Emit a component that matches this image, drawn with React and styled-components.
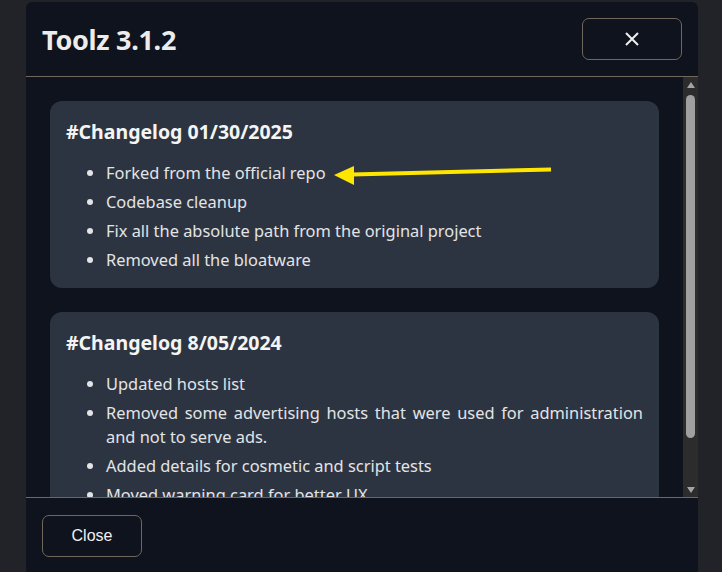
import React from 'react';
import styled, { createGlobalStyle } from 'styled-components';

const GlobalStyle = createGlobalStyle`
  html, body {
    margin: 0;
    padding: 0;
    background: #212329;
    overflow: hidden;
  }
`;

const Page = styled.div`
  width: 722px;
  height: 572px;
  display: flex;
  padding: 2px 0 0 26px;
  box-sizing: border-box;
  background: #212329;
`;

const Modal = styled.div`
  width: 672px;
  height: 600px;
  display: flex;
  flex-direction: column;
  background: #0f131d;
  border-radius: 6px 6px 0 0;
  font-family: 'Noto Sans', 'Open Sans', sans-serif;
  color: #e7e7e9;
`;

const Header = styled.div`
  height: 74px;
  display: flex;
  align-items: center;
  justify-content: space-between;
  padding: 0 16px;
  border-bottom: 1px solid #6e675c;
  flex-shrink: 0;
`;

const Title = styled.h1`
  margin: 0;
  font-size: 27px;
  font-weight: 700;
  color: #ececec;
  letter-spacing: -0.3px;
`;

const OutlineButton = styled.button`
  width: ${(p) => p.$width}px;
  height: 42px;
  display: flex;
  align-items: center;
  justify-content: center;
  background: transparent;
  border: 1px solid #6e675c;
  border-radius: 7px;
  color: #f0f0f0;
  font-family: 'Liberation Sans', Arial, sans-serif;
  font-size: 16px;
  cursor: pointer;
  padding: 0;
`;

const Body = styled.div`
  height: 420px;
  display: flex;
  flex-shrink: 0;
`;

const Content = styled.div`
  flex: 1;
  overflow: hidden;
  padding: 24px 24px 0 24px;
  display: flex;
  flex-direction: column;
  gap: 24px;
`;

const ScrollBar = styled.div`
  width: 15px;
  background: #2c2c2c;
  display: flex;
  flex-direction: column;
  align-items: center;
  flex-shrink: 0;
`;

const ScrollArrow = styled.div`
  height: 15px;
  display: flex;
  align-items: center;
  justify-content: center;
  flex-shrink: 0;
`;

const ScrollTrack = styled.div`
  flex: 1;
  width: 100%;
  display: flex;
  justify-content: center;
  padding-top: 3px;
`;

const ScrollThumb = styled.div`
  width: 9px;
  height: 343px;
  background: #9f9f9f;
  border-radius: 5px;
`;

const Card = styled.section`
  position: relative;
  background: #2d3441;
  border-radius: 12px;
  padding: 18px 16px 16px 16px;
  flex-shrink: 0;
`;

const CardTitle = styled.h2`
  margin: 0;
  font-size: 19.5px;
  line-height: 26px;
  font-weight: 700;
  color: #f4f4f4;
`;

const List = styled.ul`
  margin: 16px 0 0 0;
  padding-left: 40px;
`;

const Item = styled.li`
  font-size: 16.4px;
  line-height: 24px;
  margin-bottom: 5px;
  text-align: justify;
  color: #e3e4e6;

  &:last-child {
    margin-bottom: 0;
  }
`;

const Arrow = styled.svg`
  position: absolute;
  left: 282px;
  top: 63px;
`;

const Footer = styled.div`
  border-top: 1px solid #6e675c;
  padding: 17px 16px;
  flex-shrink: 0;
`;

const changelogs = [
  {
    date: '01/30/2025',
    items: [
      'Forked from the official repo',
      'Codebase cleanup',
      'Fix all the absolute path from the original project',
      'Removed all the bloatware',
    ],
    arrow: true,
  },
  {
    date: '8/05/2024',
    items: [
      'Updated hosts list',
      'Removed some advertising hosts that were used for administration and not to serve ads.',
      'Added details for cosmetic and script tests',
      'Moved warning card for better UX',
      'Small fixes and cleanup',
    ],
  },
];

const App = () => {
  return (
    <>
      <GlobalStyle />
      <Page>
        <Modal>
          <Header>
            <Title>Toolz 3.1.2</Title>
            <OutlineButton $width={100} aria-label="close">
              <svg width="16" height="16" viewBox="0 0 16 16">
                <path d="M2 2 L14 14 M14 2 L2 14" stroke="#eeeeee" strokeWidth="2" />
              </svg>
            </OutlineButton>
          </Header>
          <Body>
            <Content>
              {changelogs.map((log) => (
                <Card key={log.date}>
                  <CardTitle>#Changelog {log.date}</CardTitle>
                  <List>
                    {log.items.map((item) => (
                      <Item key={item}>{item}</Item>
                    ))}
                  </List>
                  {log.arrow && (
                    <Arrow width="222" height="24" viewBox="0 0 222 24">
                      <path d="M20 10.5 L219 5.5" stroke="#ffe600" strokeWidth="4" />
                      <polygon points="2,11 22,2 22,21" fill="#ffe600" />
                    </Arrow>
                  )}
                </Card>
              ))}
            </Content>
            <ScrollBar>
              <ScrollArrow>
                <svg width="8" height="6" viewBox="0 0 8 6">
                  <polygon points="4,0 8,6 0,6" fill="#a3a3a3" />
                </svg>
              </ScrollArrow>
              <ScrollTrack>
                <ScrollThumb />
              </ScrollTrack>
              <ScrollArrow>
                <svg width="8" height="6" viewBox="0 0 8 6">
                  <polygon points="0,0 8,0 4,6" fill="#a3a3a3" />
                </svg>
              </ScrollArrow>
            </ScrollBar>
          </Body>
          <Footer>
            <OutlineButton $width={100}>Close</OutlineButton>
          </Footer>
        </Modal>
      </Page>
    </>
  );
};

export default App;
